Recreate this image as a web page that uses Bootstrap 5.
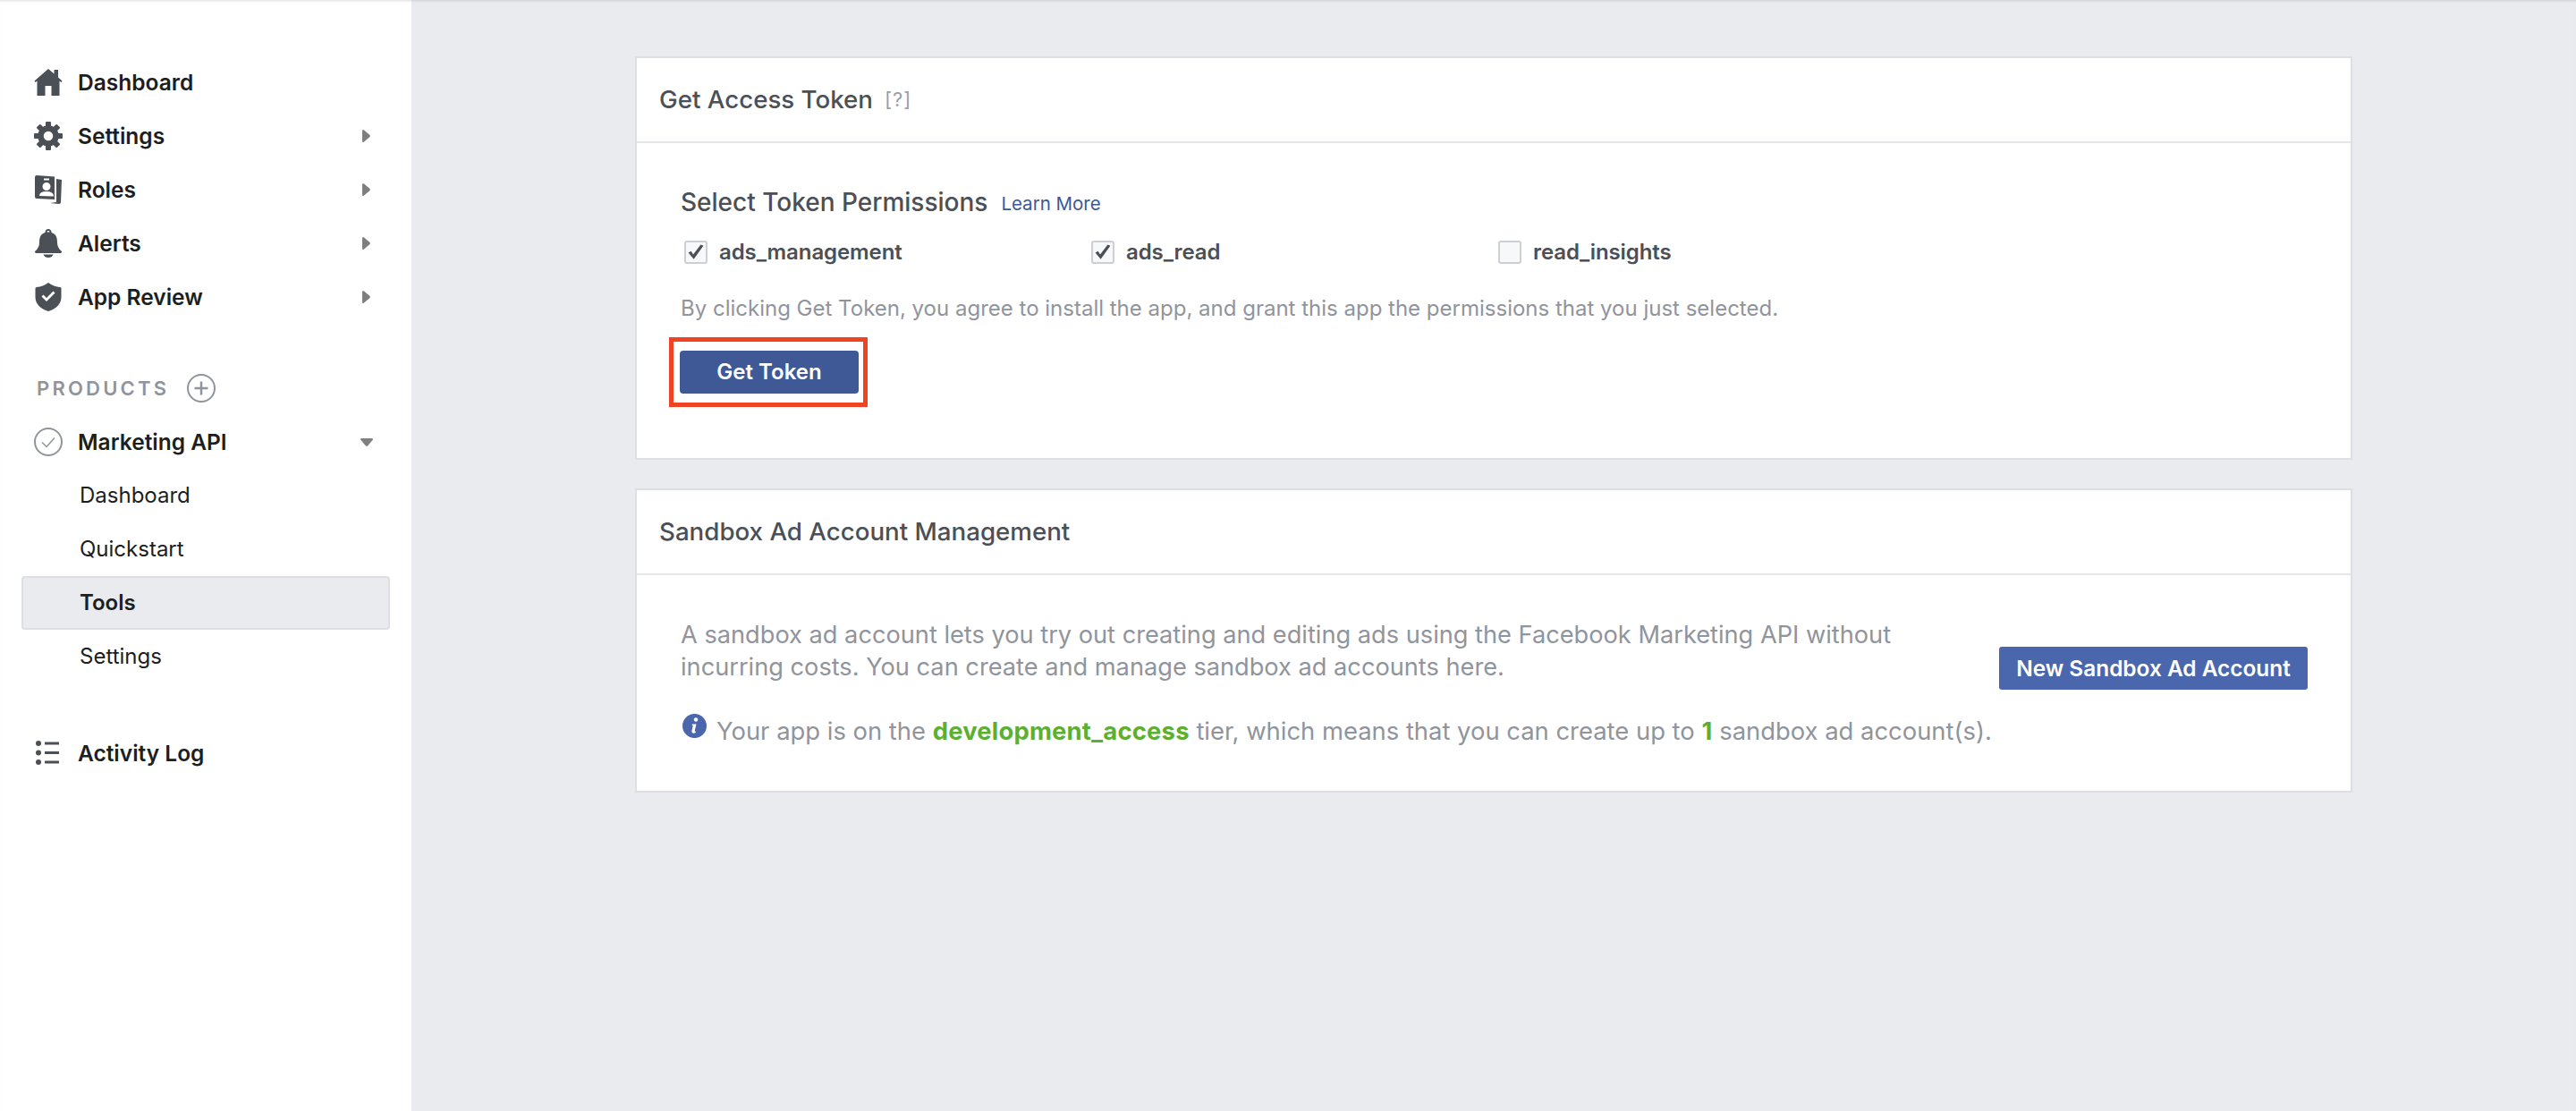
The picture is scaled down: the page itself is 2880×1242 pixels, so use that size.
<!DOCTYPE html>
<html lang="en">
<head>
<meta charset="utf-8">
<title>Marketing API Tools</title>
<link href="https://cdn.jsdelivr.net/npm/bootstrap@5.3.0/dist/css/bootstrap.min.css" rel="stylesheet">
<style>
html,body{height:100%}
body{font-family:Inter,"Liberation Sans",sans-serif;background:#e9ebee;color:#1c1e21;min-height:1242px}
.shell{min-height:1242px;box-shadow:inset 0 3px 3px -2px rgba(0,0,0,.12)}
.side{width:460px;flex:0 0 460px;background:#fff;padding:62px 24px 0 24px;box-shadow:inset 0 3px 3px -2px rgba(0,0,0,.14)}
.mitem{height:60px;font-size:24.5px;font-weight:600;padding-left:14px;padding-right:22px;color:#1c1e21;gap:17px}
.icon-gap{gap:17px}
.mitem svg.ic{width:32px;height:32px;flex:0 0 32px;fill:#4b4f56}
.arrow{width:9px;height:14px;fill:#7f7f7f}
.caret{width:14px;height:9px;fill:#7f7f7f;margin-right:-3px}
.sub{height:60px;font-size:24px;padding-left:63px;font-weight:400;color:#1c1e21;border:2px solid transparent}
.sub.on{font-weight:600;background:#e9ebee;border:2px solid #dddfe2;border-radius:4px}
.prod{height:60px;padding-left:17px;color:#90949c;font-size:22px;font-weight:600;letter-spacing:3.2px;gap:20px}
.gapa{margin-top:42px}.gapb{margin-top:48px}
.panes{width:1920px;margin-left:250px;padding-top:63px}
.pane{border:2px solid #dddfe2;border-radius:0;background:#fff;margin-bottom:32px}
.pane .card-header{background:#fff;border-bottom:2px solid #e5e6e9;border-radius:0;height:95px;padding:0 0 0 25px;font-size:27.7px;font-weight:500;color:#4b4f56}
.hint{font-size:22px;color:#9a9ea6;font-weight:400;margin-left:13px;letter-spacing:1px}
.pane .card-body{padding:0 0 0 49px}
.body1{height:352px;padding-top:46px!important}
.body2{height:241px;padding-top:49px!important;padding-right:48px!important}
.h2x{font-size:28px;font-weight:500;color:#4b4f56;line-height:36px}
.lm{font-size:20.5px;font-weight:400;color:#3b5998;text-decoration:none;margin-left:15px;padding-top:4px}
.permrow{margin-top:16px}
.perm{width:455px;padding-left:4px;gap:13px;font-size:24px;font-weight:600;color:#4b4f56;height:40px;letter-spacing:-.1px}
.perm .form-check-input{width:26px;height:26px;margin:0;border:2px solid #ccd0d5;border-radius:3px;background-color:#f7f8fa;background-size:24px;flex:0 0 26px}
.perm .form-check-input:checked{background-color:#f7f8fa;border-color:#ccd0d5;background-image:url("data:image/svg+xml,%3Csvg xmlns='http://www.w3.org/2000/svg' viewBox='0 0 20 20'%3E%3Cpath fill='%234b4f56' d='M3 10.500l2.500-1.500 2 3L14.500 3l2.500 1L8 16.500z'/%3E%3C/svg%3E")}
.note{font-size:24px;color:#90949c;margin:25px 0 0;line-height:36px}
.tokenbox{display:inline-block;border:5px solid #ee4423;padding:10px 5px 10px 7px;margin-left:-13px;margin-top:14px;line-height:0}
.tokenbtn{width:200px;height:48px;padding:0;background:#3f5996;border:0;border-radius:4px;color:#fff;font-size:24px;font-weight:600}
.para{font-size:27.2px;line-height:36px;color:#90949c;margin:0;width:1400px}
.newbtn{width:345px;height:48px;padding:0;background:#4a67ad;border:0;border-radius:3px;color:#fff;font-size:24.4px;font-weight:600;white-space:nowrap;margin-top:31px}
.tier{font-size:27.4px;color:#90949c;line-height:36px;margin-top:28px;padding-left:2px;gap:11px}
.tier b{color:#5cb030;font-weight:700;letter-spacing:.2px}
.tier svg{width:27px;height:27px;margin-top:-12px;flex:0 0 27px}
</style>
</head>
<body>
<div class="d-flex shell">
  <nav class="side">
    <div class="mitem d-flex align-items-center">
      <svg class="ic" viewBox="0 0 32 32"><path d="M16 1 .5 14.500 1.500 16l2-1.600V31h9V20h7v11h9V14.400l2 1.600 1-1.500L27 10.500V2h-4.500v4.600z"/></svg>
      <span>Dashboard</span></div>
    <div class="mitem d-flex align-items-center justify-content-between">
      <span class="d-flex align-items-center icon-gap">
      <svg class="ic" viewBox="0 0 32 32"><circle cx="16" cy="16" r="8.500" fill="none" stroke="#4b4f56" stroke-width="6.500"/><g><rect x="13" y="0" width="6" height="6" rx="1"/><rect x="13" y="26" width="6" height="6" rx="1"/><rect x="0" y="13" width="6" height="6" rx="1"/><rect x="26" y="13" width="6" height="6" rx="1"/></g><g transform="rotate(45 16 16)"><rect x="13" y="0" width="6" height="6" rx="1"/><rect x="13" y="26" width="6" height="6" rx="1"/><rect x="0" y="13" width="6" height="6" rx="1"/><rect x="26" y="13" width="6" height="6" rx="1"/></g></svg>
      <span>Settings</span></span>
      <svg class="arrow" viewBox="0 0 9 14"><path d="M1 0q-1 0-1 1.500v11Q0 14 1 14q.5 0 1-.5l6.500-5.500q.5-1 0-2L2 .5Q1.500 0 1 0z"/></svg></div>
    <div class="mitem d-flex align-items-center justify-content-between">
      <span class="d-flex align-items-center icon-gap">
      <svg class="ic" viewBox="0 0 32 32"><path fill-rule="evenodd" d="M3 0l20 1.500V27L3 26q-2 0-2-2V2q0-2 2-2zm8 3.500v2h6v-2zm3 4.500a4.500 4.500 0 1 0 0 9 4.500 4.500 0 0 0 0-9zM6 23l16 .5q0-5.500-8-5.500t-8 5z"/><path d="M25 4l6 1-1 25q0 2-2 2l-10-1 7-1q0-.5 0-3z"/></svg>
      <span>Roles</span></span>
      <svg class="arrow" viewBox="0 0 9 14"><path d="M1 0q-1 0-1 1.500v11Q0 14 1 14q.5 0 1-.5l6.500-5.500q.5-1 0-2L2 .5Q1.500 0 1 0z"/></svg></div>
    <div class="mitem d-flex align-items-center justify-content-between">
      <span class="d-flex align-items-center icon-gap">
      <svg class="ic" viewBox="0 0 32 32"><path fill-rule="evenodd" d="M16 0a3.500 3.500 0 0 1 3.500 4C25 5.500 26 10 26 15q0 6 4.500 9.500 1.500 2-1 2.500H2.500q-2.500-.5-1-2.500Q6 21 6 15c0-5 1-9.500 6.500-11A3.500 3.500 0 0 1 16 0zm0 2a1.500 1.500 0 0 0-1.500 1.600h3A1.500 1.500 0 0 0 16 2z"/><path d="M10.500 28.500h11Q20 32 16 32t-5.500-3.500z"/></svg>
      <span>Alerts</span></span>
      <svg class="arrow" viewBox="0 0 9 14"><path d="M1 0q-1 0-1 1.500v11Q0 14 1 14q.5 0 1-.5l6.500-5.500q.5-1 0-2L2 .5Q1.500 0 1 0z"/></svg></div>
    <div class="mitem d-flex align-items-center justify-content-between">
      <span class="d-flex align-items-center icon-gap">
      <svg class="ic" viewBox="0 0 32 32"><path fill-rule="evenodd" d="M16 0q6 4.500 13 5 1.500.2 1.500 1.500V16q0 11-14.500 16Q1.500 27 1.500 16V6.500Q1.500 5.200 3 5 10 4.500 16 0zm7.500 11.500-2-2-7.500 7.500-3.500-3.500-2 2 5.500 5.500z"/></svg>
      <span>App Review</span></span>
      <svg class="arrow" viewBox="0 0 9 14"><path d="M1 0q-1 0-1 1.500v11Q0 14 1 14q.5 0 1-.5l6.500-5.500q.5-1 0-2L2 .5Q1.500 0 1 0z"/></svg></div>

    <div class="prod gapa d-flex align-items-center">
      <span>PRODUCTS</span>
      <svg width="32" height="32" viewBox="0 0 32 32" fill="none" stroke="#90949c" stroke-width="2"><circle cx="16" cy="16" r="15"/><path d="M16 8.500v15M8.500 16h15" stroke-width="2.500"/></svg></div>
    <div class="mitem d-flex align-items-center justify-content-between">
      <span class="d-flex align-items-center icon-gap">
      <svg width="32" height="32" viewBox="0 0 32 32" fill="none" stroke="#90949c"><circle cx="16" cy="16" r="15" stroke-width="2"/><path d="M9 16.500l5 5 9-10" stroke-width="1.500"/></svg>
      <span>Marketing API</span></span>
      <svg class="caret" viewBox="0 0 14 9"><path d="M1.500 0h11Q14 0 14 1q0 .5-.5 1L8 8.500q-1 .5-2 0L.5 2Q0 1.500 0 1q0-1 1.500-1z"/></svg></div>
    <div class="sub d-flex align-items-center">Dashboard</div>
    <div class="sub d-flex align-items-center">Quickstart</div>
    <div class="sub on d-flex align-items-center">Tools</div>
    <div class="sub d-flex align-items-center">Settings</div>
    <div class="mitem gapb d-flex align-items-center">
      <svg class="ic" viewBox="0 0 32 32"><circle cx="5" cy="5" r="3"/><circle cx="5" cy="15.500" r="3"/><circle cx="5" cy="26" r="3"/><path d="M12 3.500h16v3H12zM12 14h16v3H12zM12 24.500h16v3H12z"/></svg>
      <span>Activity Log</span></div>
  </nav>

  <main class="flex-grow-1">
    <div class="panes">
      <section class="card pane">
        <div class="card-header d-flex align-items-center"><span>Get Access Token</span><span class="hint">[?]</span></div>
        <div class="card-body body1">
          <div class="h2x d-flex align-items-center"><span>Select Token Permissions</span><a class="lm" href="#">Learn More</a></div>
          <div class="d-flex permrow">
            <label class="perm d-flex align-items-center"><input class="form-check-input" type="checkbox" checked>ads_management</label>
            <label class="perm d-flex align-items-center"><input class="form-check-input" type="checkbox" checked>ads_read</label>
            <label class="perm d-flex align-items-center"><input class="form-check-input" type="checkbox">read_insights</label>
          </div>
          <p class="note">By clicking Get Token, you agree to install the app, and grant this app the permissions that you just selected.</p>
          <div class="tokenbox"><button class="btn tokenbtn" type="button">Get Token</button></div>
        </div>
      </section>
      <section class="card pane">
        <div class="card-header d-flex align-items-center"><span>Sandbox Ad Account Management</span></div>
        <div class="card-body body2">
          <div class="d-flex align-items-start justify-content-between">
            <p class="para">A sandbox ad account lets you try out creating and editing ads using the Facebook Marketing API without incurring costs. You can create and manage sandbox ad accounts here.</p>
            <button class="btn newbtn" type="button">New Sandbox Ad Account</button>
          </div>
          <div class="tier d-flex align-items-center">
            <svg viewBox="0 0 27 27"><circle cx="13.500" cy="13.500" r="13.500" fill="#4a67ad"/><circle cx="15" cy="6.500" r="2.200" fill="#fff"/><path d="M11 11.500h4.500l-1.800 7.500q-.2 1.200 1.500.6l-.3 1.400q-5 2-4.500-1.800l1.300-6.200-1 0z" fill="#fff"/></svg>
            <span>Your app is on the <b>development_access</b> tier, which means that you can create up to <b>1</b> sandbox ad account(s).</span>
          </div>
        </div>
      </section>
    </div>
  </main>
</div>
<script src="https://cdn.jsdelivr.net/npm/bootstrap@5.3.0/dist/js/bootstrap.bundle.min.js"></script>
</body>
</html>
